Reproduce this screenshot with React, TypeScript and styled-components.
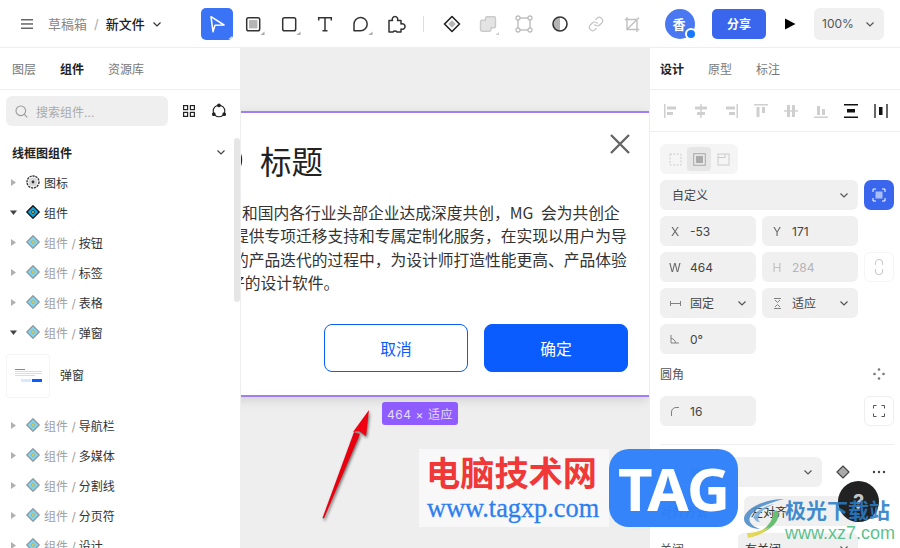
import React from "react";
import styled, { createGlobalStyle } from "styled-components";
import { Link } from "lucide-react";

const FONT = `Inter, "Noto Sans CJK SC", sans-serif`;

const Global = createGlobalStyle`
  html, body { margin: 0; padding: 0; background: #fff; }
  body { font-family: ${FONT}; color: #333; }
  * { box-sizing: border-box; }
`;

const Page = styled.div`
  position: relative;
  width: 900px;
  height: 548px;
  overflow: hidden;
  display: flex;
  flex-direction: column;
  font-size: 12px;
`;

/* ---------- top bar ---------- */
const TopBar = styled.header`
  height: 48px;
  flex: none;
  display: flex;
  align-items: center;
  border-bottom: 1px solid #eee;
`;
const FileArea = styled.div`
  width: 201px;
  flex: none;
  display: flex;
  align-items: center;
  padding-left: 20px;
  font-size: 13px;
`;
const Crumb = styled.span<{ $strong?: boolean }>`
  color: ${(p) => (p.$strong ? "#222" : "#888")};
  font-weight: ${(p) => (p.$strong ? 500 : 400)};
  white-space: nowrap;
`;
const Slash = styled.span`
  color: #aaa;
  margin: 0 7px;
`;
const ToolGroup = styled.div`
  display: flex;
  align-items: center;
  gap: 4px;
`;
const ToolButton = styled.div<{ $active?: boolean; $muted?: boolean }>`
  width: 32px;
  height: 32px;
  border-radius: 5px;
  display: flex;
  align-items: center;
  justify-content: center;
  background: ${(p) => (p.$active ? "#3b73f7" : "transparent")};
  color: ${(p) => (p.$muted ? "#c4c4c4" : "#333")};
`;
const ToolDivider = styled.div`
  width: 1px;
  height: 16px;
  background: #ddd;
  margin: 0 12px 0 10px;
`;
const Avatar = styled.div`
  position: relative;
  width: 30px;
  height: 30px;
  margin-left: 17px;
  border-radius: 50%;
  background: #4a78f0;
  color: #fff;
  font-size: 13px;
  font-weight: 700;
  display: flex;
  align-items: center;
  justify-content: center;
  padding-right: 2px;
`;
const AvatarDot = styled.span`
  position: absolute;
  right: -2px;
  bottom: -1px;
  width: 12px;
  height: 12px;
  border-radius: 50%;
  background: #1677ff;
  border: 2px solid #fff;
`;
const ShareButton = styled.div`
  width: 54px;
  height: 30px;
  margin-left: 17px;
  border-radius: 5px;
  background: #3a66ee;
  color: #fff;
  font-size: 12px;
  font-weight: 700;
  display: flex;
  align-items: center;
  justify-content: center;
`;
const PlayButton = styled.div`
  width: 24px;
  height: 24px;
  margin: 0 12px;
  display: flex;
  align-items: center;
  justify-content: center;
`;
const ZoomBox = styled.div`
  width: 70px;
  height: 32px;
  border-radius: 6px;
  background: #f0f0f0;
  color: #555;
  display: flex;
  align-items: center;
  justify-content: space-between;
  padding: 0 9px 0 8px;
`;

/* ---------- main columns ---------- */
const Main = styled.div`
  flex: 1;
  min-height: 0;
  display: flex;
`;
const LeftPanel = styled.aside`
  position: relative;
  width: 241px;
  flex: none;
  border-right: 1px solid #eee;
  overflow: hidden;
  background: #fff;
`;
const Tabs = styled.div`
  height: 42px;
  display: flex;
  align-items: center;
  gap: 24px;
  border-bottom: 1px solid #eee;
`;
const LeftTabs = styled(Tabs)`
  padding-left: 12px;
`;
const RightTabs = styled(Tabs)`
  padding-left: 10px;
`;
const Tab = styled.span<{ $active?: boolean }>`
  color: ${(p) => (p.$active ? "#222" : "#777")};
  font-weight: ${(p) => (p.$active ? 600 : 400)};
`;
const SearchRow = styled.div`
  display: flex;
  align-items: center;
  padding: 6px 0 0 6px;
`;
const SearchBox = styled.div`
  width: 162px;
  height: 30px;
  margin-right: 6px;
  border-radius: 6px;
  background: #efefef;
  color: #aaa;
  display: flex;
  align-items: center;
  gap: 8px;
  padding: 0 9px;
`;
const SearchAction = styled.div`
  width: 30px;
  height: 30px;
  display: flex;
  align-items: center;
  justify-content: center;
`;
const SectionHead = styled.div`
  height: 30px;
  margin-top: 11px;
  padding: 0 14px 0 12px;
  display: flex;
  align-items: center;
  justify-content: space-between;
  font-weight: 600;
  color: #222;
`;
const TreeRow = styled.div`
  height: 30px;
  display: flex;
  align-items: center;
  padding-left: 10px;
  white-space: nowrap;
`;
const CaretSlot = styled.span`
  width: 16px;
  flex: none;
  display: flex;
  align-items: center;
`;
const TreeIcon = styled.span`
  width: 18px;
  flex: none;
  display: flex;
  align-items: center;
`;
const Prefix = styled.span`
  color: #a0a0a0;
  margin-right: 3px;
`;
const RowName = styled.span`
  color: #333;
`;
const ThumbRow = styled.div`
  height: 63px;
  display: flex;
  align-items: flex-start;
  gap: 10px;
  padding: 7px 0 0 6px;
`;
const ThumbName = styled.span`
  line-height: 44px;
  color: #333;
`;
const Thumb = styled.div`
  width: 44px;
  height: 44px;
  border: 1px solid #f4f4f4;
  border-radius: 3px;
  padding: 14px 7px 0 8px;
  display: flex;
  flex-direction: column;
  gap: 1px;
`;
const ThumbLine = styled.div<{ $w: number; $dark?: boolean }>`
  height: 1px;
  width: ${(p) => p.$w}px;
  background: ${(p) => (p.$dark ? "#888" : "#ddd")};
`;
const ThumbButtons = styled.div`
  display: flex;
  justify-content: flex-end;
  gap: 1px;
  margin-top: 2px;
`;
const ThumbButton = styled.div<{ $primary?: boolean }>`
  width: 10px;
  height: 3px;
  background: ${(p) => (p.$primary ? "#0a5cff" : "#dbe7ff")};
`;
const ScrollThumb = styled.div`
  position: absolute;
  left: 234px;
  top: 90px;
  width: 6px;
  height: 164px;
  border-radius: 3px;
  background: #e6e6e6;
`;

/* ---------- canvas ---------- */
const Canvas = styled.main`
  position: relative;
  flex: 1;
  background: #eee;
  overflow: hidden;
`;
const Frame = styled.section`
  position: absolute;
  left: -57px;
  top: 63px;
  width: 465px;
  height: 286px;
  background: #fff;
  border-top: 2px solid #a27ef5;
  border-bottom: 2px solid #a27ef5;
  box-shadow: 0 3px 10px rgba(0, 0, 0, 0.12);
  display: flex;
  flex-direction: column;
  color: #222;
`;
const TitleRow = styled.div`
  height: 48px;
  margin-top: 23px;
  padding-left: 23px;
  display: flex;
  align-items: center;
  gap: 17px;
  font-size: 31.5px;
  line-height: 48px;
  color: #222;
  font-family: "Noto Sans CJK SC", sans-serif;
`;
const CloseIcon = styled.div`
  position: absolute;
  top: 20px;
  right: 18px;
  width: 22px;
  height: 22px;
`;
const Body = styled.div`
  margin-top: 17px;
  font-family: "Noto Sans CJK SC", sans-serif;
  font-size: 15.75px;
  line-height: 23.3px;
  color: #333;
`;
const BodyLine = styled.div<{ $left: number; $word?: number }>`
  padding-left: ${(p) => p.$left}px;
  word-spacing: ${(p) => p.$word ?? 0}px;
  white-space: nowrap;
`;
const Actions = styled.div`
  margin-top: 30px;
  padding-right: 21px;
  display: flex;
  justify-content: flex-end;
  gap: 16px;
`;
const ModalButton = styled.div<{ $primary?: boolean }>`
  width: 144px;
  height: 48px;
  border-radius: 8px;
  border: 1px solid #0a5cff;
  background: ${(p) => (p.$primary ? "#0a5cff" : "#fff")};
  color: ${(p) => (p.$primary ? "#fff" : "#0a5cff")};
  font-family: "Noto Sans CJK SC", sans-serif;
  font-size: 15.75px;
  display: flex;
  align-items: center;
  justify-content: center;
`;
const SizeTag = styled.div`
  position: absolute;
  left: 141px;
  top: 354px;
  width: 76px;
  height: 23px;
  border-radius: 3px;
  background: #8f5cff;
  color: #e6dcff;
  font-size: 12px;
  letter-spacing: 0.55px;
  display: flex;
  align-items: center;
  justify-content: center;
  white-space: nowrap;
`;

/* ---------- right panel ---------- */
const RightPanel = styled.aside`
  width: 251px;
  flex: none;
  border-left: 1px solid #eee;
  overflow: hidden;
  background: #fff;
`;
const AlignRow = styled.div`
  height: 42px;
  padding-left: 6px;
  display: flex;
  align-items: center;
  border-bottom: 1px solid #eee;
`;
const AlignButton = styled.div<{ $on?: boolean }>`
  width: 30px;
  height: 30px;
  display: flex;
  align-items: center;
  justify-content: center;
  color: ${(p) => (p.$on ? "#111" : "#cfcfcf")};
`;
const Props = styled.div`
  padding: 12px 6px 0 10px;
`;
const PropGrid = styled.div`
  display: grid;
  grid-template-columns: 96px 96px 30px;
  grid-auto-rows: 30px;
  gap: 6px;
`;
const Segment = styled.div`
  grid-column: 1;
  width: 78px;
  border-radius: 6px;
  background: #f5f5f5;
  padding: 3px;
  display: flex;
`;
const SegItem = styled.div<{ $active?: boolean }>`
  width: 24px;
  border-radius: 4px;
  background: ${(p) => (p.$active ? "#e6e6e6" : "transparent")};
  display: flex;
  align-items: center;
  justify-content: center;
`;
const Field = styled.div<{ $span?: number; $muted?: boolean }>`
  grid-column: ${(p) => (p.$span ? `span ${p.$span}` : "auto")};
  background: #f0f0f0;
  border-radius: 6px;
  display: flex;
  align-items: center;
  position: relative;
  color: ${(p) => (p.$muted ? "#b5b5b5" : "#444")};
  white-space: nowrap;
`;
const FieldLead = styled.span`
  width: 30px;
  flex: none;
  display: flex;
  justify-content: center;
  color: inherit;
  opacity: 0.8;
`;
const FieldTail = styled.span`
  margin-left: auto;
  margin-right: 9px;
  display: flex;
`;
const CjkLabel = styled.span<{ $pad?: number }>`
  padding-left: ${(p) => p.$pad ?? 0}px;
  margin-bottom: 2px;
`;
const AccentButton = styled.div`
  background: #3a66ee;
  border-radius: 7px;
  display: flex;
  align-items: center;
  justify-content: center;
`;
const GhostButton = styled.div<{ $soft?: boolean }>`
  border: 1px solid ${(p) => (p.$soft ? "#f5f5f5" : "#eee")};
  border-radius: 6px;
  display: flex;
  align-items: center;
  justify-content: center;
`;
const PropHead = styled.div`
  height: 30px;
  margin-top: 5px;
  display: flex;
  align-items: center;
  justify-content: space-between;
  padding-right: 9px;
  color: #555;
`;
const CornerGrid = styled(PropGrid)`
  margin-top: 7px;
`;
const Rule = styled.div`
  height: 1px;
  background: #eee;
  margin-top: 18px;
`;
const CompRow = styled.div`
  margin-top: 12px;
  height: 30px;
  display: flex;
  align-items: center;
`;
const CompSelect = styled.div`
  width: 162px;
  height: 30px;
  border-radius: 6px;
  background: #f0f0f0;
  display: flex;
  align-items: center;
  padding: 0 9px 0 8px;
  gap: 8px;
  color: #888;
`;
const CompAction = styled.div`
  width: 30px;
  height: 30px;
  margin-left: 6px;
  display: flex;
  align-items: center;
  justify-content: center;
`;
const PropRow = styled.div<{ $offset: number; $top: number }>`
  display: grid;
  grid-template-columns: ${(p) => p.$offset}px 1fr;
  margin-top: ${(p) => p.$top}px;
  height: 30px;
  width: 198px;
  align-items: center;
  color: #555;
`;
const PropSelect = styled.div`
  height: 30px;
  border-radius: 6px;
  background: #f0f0f0;
  display: flex;
  align-items: center;
  padding: 0 9px 0 7px;
  justify-content: space-between;
  color: #333;
`;

/* ---------- overlays ---------- */
const ArrowMark = styled.svg`
  position: absolute;
  left: 300px;
  top: 390px;
  filter: drop-shadow(1px 2px 1.5px rgba(0, 0, 0, 0.55));
`;
const Help = styled.div`
  position: absolute;
  left: 838px;
  top: 481px;
  width: 41px;
  height: 41px;
  border-radius: 50%;
  background: #222;
  color: #c8c8c8;
  font-size: 20px;
  font-weight: 700;
  display: flex;
  align-items: center;
  justify-content: center;
`;
const SiteBadge = styled.div`
  position: absolute;
  left: 419px;
  top: 449px;
  display: flex;
`;
const SiteBox = styled.div`
  width: 190px;
  height: 78px;
  background: #f8f8f9;
  display: flex;
  flex-direction: column;
  padding-left: 8px;
`;
const SiteName = styled.div`
  font-family: "Noto Sans CJK SC", sans-serif;
  font-weight: 700;
  font-size: 34.2px;
  line-height: 45px;
  margin-left: -1px;
  color: #f03838;
  white-space: nowrap;
`;
const SiteUrl = styled.div`
  font-family: "Liberation Serif", serif;
  font-size: 26.3px;
  line-height: 30px;
  color: #2d7ff0;
  -webkit-text-stroke: 0.3px #2d7ff0;
  white-space: nowrap;
`;
const TagLogo = styled.div`
  width: 129px;
  height: 78px;
  border-radius: 20px;
  background: rgba(45, 127, 249, 0.96);
  color: #fff;
  font-family: "Noto Sans", sans-serif;
  font-weight: 700;
  font-size: 60px;
  line-height: 78px;
  letter-spacing: -1px;
  display: flex;
  align-items: center;
  justify-content: center;
`;
const XzMark = styled.div`
  position: absolute;
  left: 742px;
  top: 495px;
  display: flex;
  gap: 1px;
`;
const XzText = styled.div`
  display: flex;
  flex-direction: column;
  padding-top: 1px;
`;
const XzName = styled.div`
  font-family: "Noto Sans CJK SC", sans-serif;
  font-weight: 700;
  font-size: 21px;
  line-height: 27px;
  color: rgba(40, 125, 200, 0.88);
  white-space: nowrap;
`;
const XzUrl = styled.div`
  font-family: "Liberation Sans", sans-serif;
  font-size: 18px;
  line-height: 21px;
  color: rgba(80, 190, 135, 0.95);
  white-space: nowrap;
`;

/* ---------- icons ---------- */
const Chevron = ({ color = "#555", size = 10 }: { color?: string; size?: number }) => (
  <svg width={size} height={size} viewBox="0 0 10 10" fill="none">
    <path d="M1.5 3.5 5 7l3.5-3.5" stroke={color} strokeWidth="1.2" />
  </svg>
);
const Corner = ({ fill = "#aaa" }: { fill?: string }) => <path d="M27.5 23.5v3.5h-4z" fill={fill} />;
const T32 = ({ children }: { children: React.ReactNode }) => (
  <svg width="32" height="32" viewBox="0 0 32 32" fill="none">
    {children}
  </svg>
);
const Caret = ({ open }: { open?: boolean }) => (
  <svg width="7" height="7" viewBox="0 0 7 7">
    {open ? <path d="M0 1.5h7L3.5 6z" fill="#444" /> : <path d="M1 0l5 3.5L1 7z" fill="#b0b0b0" />}
  </svg>
);
const CompIcon = ({ dark }: { dark?: boolean }) => (
  <svg width="14" height="14" viewBox="0 0 14 14">
    <path
      d="M7 .8 13.2 7 7 13.2.8 7z"
      fill={dark ? "#10a5dc" : "#80d4ee"}
      stroke={dark ? "#111" : "#8e9aa0"}
      strokeWidth="1.3"
      strokeLinejoin="round"
    />
    <circle cx="7" cy="7" r="1.8" fill={dark ? "#222" : "#a8a870"} />
    <circle cx="7" cy="7" r=".9" fill="#f2d640" />
  </svg>
);
const GearIcon = () => (
  <svg width="14" height="14" viewBox="0 0 14 14" fill="none">
    <circle cx="7" cy="7" r="6" stroke="#333" strokeWidth="1.4" strokeDasharray="2.2 .8" />
    <circle cx="7" cy="7" r="4.6" fill="#d8d8d8" />
    <circle cx="7" cy="7" r="1.4" fill="#333" />
  </svg>
);
const A20 = ({ children }: { children: React.ReactNode }) => (
  <svg width="20" height="20" viewBox="0 0 20 20" fill="currentColor">
    {children}
  </svg>
);
const AlignIcons = [
  <A20 key="0"><rect x="3" y="3" width="1.5" height="14" /><rect x="6" y="5.5" width="9" height="3" /><rect x="6" y="11" width="6" height="3" /></A20>,
  <A20 key="1"><rect x="9.2" y="3" width="1.5" height="14" /><rect x="4" y="5.5" width="12" height="3" /><rect x="6" y="11" width="8" height="3" /></A20>,
  <A20 key="2"><rect x="15.5" y="3" width="1.5" height="14" /><rect x="5" y="5.5" width="9" height="3" /><rect x="8" y="11" width="6" height="3" /></A20>,
  <A20 key="3"><rect x="3" y="3" width="14" height="1.5" /><rect x="5.5" y="6" width="3" height="10" /><rect x="11" y="6" width="3" height="6" /></A20>,
  <A20 key="4"><rect x="3" y="9.2" width="14" height="1.5" /><rect x="6" y="4" width="3" height="12" /><rect x="11" y="4" width="3" height="12" /></A20>,
  <A20 key="5"><rect x="3" y="15.5" width="14" height="1.5" /><rect x="6" y="5" width="3" height="9" /><rect x="11" y="8" width="3" height="6" /></A20>,
  <A20 key="6"><rect x="3" y="3" width="14" height="1.5" /><rect x="3" y="15.5" width="14" height="1.5" /><rect x="6" y="8" width="8" height="3.5" /></A20>,
  <A20 key="7"><rect x="3" y="3" width="2" height="14" fill="#666" /><rect x="15" y="3" width="2" height="14" fill="#666" /><rect x="8" y="6" width="3.5" height="8" /></A20>,
];

const treeRows = [
  { name: "图标", gear: true },
  { name: "组件", dark: true, open: true },
  { prefix: true, name: "按钮" },
  { prefix: true, name: "标签" },
  { prefix: true, name: "表格" },
  { prefix: true, name: "弹窗", open: true },
];
const treeRowsAfter = ["导航栏", "多媒体", "分割线", "分页符", "设计"];

type Row = { name: string; gear?: boolean; dark?: boolean; open?: boolean; prefix?: boolean };
const Tree = ({ name, gear, dark, open, prefix }: Row) => (
  <TreeRow>
    <CaretSlot>
      <Caret open={open} />
    </CaretSlot>
    <TreeIcon>{gear ? <GearIcon /> : <CompIcon dark={dark} />}</TreeIcon>
    {prefix && <Prefix>组件 /</Prefix>}
    <RowName>{name}</RowName>
  </TreeRow>
);

export default function App() {
  return (
    <Page>
      <Global />
      <TopBar>
        <FileArea>
          <svg width="14" height="12" viewBox="0 0 14 12" fill="#666" style={{ marginRight: 14 }}>
            <rect x="1" y="1" width="12" height="1.5" />
            <rect x="1" y="5.2" width="12" height="1.5" />
            <rect x="1" y="9.5" width="12" height="1.5" />
          </svg>
          <Crumb>草稿箱</Crumb>
          <Slash>/</Slash>
          <Crumb $strong>新文件</Crumb>
          <span style={{ marginLeft: 7, display: "flex" }}>
            <Chevron color="#333" />
          </span>
        </FileArea>
        <ToolGroup>
          <ToolButton $active>
            <T32>
              <path d="M10 8.7 23 17l-9 .2-2 6.5z" stroke="#fff" strokeWidth="1.5" strokeLinejoin="round" />
              <path d="M31 28v3h-3.5z" fill="#cfdcfb" />
            </T32>
          </ToolButton>
          <ToolButton>
            <T32>
              <rect x="9.7" y="9.7" width="13" height="13" rx="1.8" stroke="#333" strokeWidth="1.5" />
              <rect x="12" y="12" width="8.4" height="8.4" fill="#b5b5b5" />
              <Corner />
            </T32>
          </ToolButton>
          <ToolButton>
            <T32>
              <rect x="9.7" y="9.7" width="13" height="13" rx="1.8" stroke="#333" strokeWidth="1.5" />
              <Corner />
            </T32>
          </ToolButton>
          <ToolButton>
            <T32>
              <path d="M9.7 12.5V9.7h12.6v2.8M16 9.7v13M13.5 22.7h5" stroke="#333" strokeWidth="1.5" />
            </T32>
          </ToolButton>
          <ToolButton>
            <T32>
              <path
                d="M9 22.7v-6.2a6.6 6.6 0 1 1 6.6 6.2z"
                stroke="#333"
                strokeWidth="1.5"
                strokeLinejoin="round"
              />
              <Corner />
            </T32>
          </ToolButton>
          <ToolButton>
            <T32>
              <path
                d="M8 12.5h3.5a2.8 2.8 0 1 1 5 0H20v3.5a2.8 2.8 0 1 1 0 5V24h-4a2.4 2.4 0 0 0-4 0H8z"
                stroke="#333"
                strokeWidth="1.5"
                strokeLinejoin="round"
              />
            </T32>
          </ToolButton>
        </ToolGroup>
        <ToolDivider />
        <ToolGroup>
          <ToolButton>
            <T32>
              <path d="M16 8.5 23.5 16 16 23.5 8.5 16z" stroke="#222" strokeWidth="1.6" strokeLinejoin="round" />
              <path d="M16 12.2 19.8 16 16 19.8 12.2 16z" fill="#b5b5b5" />
            </T32>
          </ToolButton>
          <ToolButton>
            <T32>
              <path
                d="M15 8.7h7a1.5 1.5 0 0 1 1.5 1.5v8a1.5 1.5 0 0 1-1.5 1.5h-3v2.1a1.5 1.5 0 0 1-1.5 1.5H10a1.5 1.5 0 0 1-1.5-1.5v-8a1.5 1.5 0 0 1 1.5-1.5h3.5v-2.1A1.5 1.5 0 0 1 15 8.7z"
                fill="#e4e4e4"
                stroke="#cacaca"
                strokeWidth="1.4"
              />
              <path d="M27 24v3h-3.5z" fill="#ccc" />
            </T32>
          </ToolButton>
          <ToolButton>
            <T32>
              <rect x="10" y="10" width="12" height="12" stroke="#bdbdbd" strokeWidth="1.4" />
              {[10, 22].map((x) =>
                [10, 22].map((y) => (
                  <circle key={`${x}${y}`} cx={x} cy={y} r="2" fill="#fff" stroke="#bdbdbd" strokeWidth="1.3" />
                ))
              )}
            </T32>
          </ToolButton>
          <ToolButton>
            <T32>
              <path d="M16 9.5a6.5 6.5 0 0 0 0 13z" fill="#b5b5b5" />
              <circle cx="16" cy="16" r="7" stroke="#333" strokeWidth="1.6" />
            </T32>
          </ToolButton>
          <ToolButton $muted>
            <Link size={16} strokeWidth={1.8} />
          </ToolButton>
          <ToolButton>
            <T32>
              <path
                d="M11 9v12.5h12.3M8.7 11.5H21V24M11 21.5 23 9.5"
                stroke="#c0c0c0"
                strokeWidth="1.4"
              />
            </T32>
          </ToolButton>
        </ToolGroup>
        <Avatar>
          香
          <AvatarDot />
        </Avatar>
        <ShareButton>分享</ShareButton>
        <PlayButton>
          <svg width="12" height="12" viewBox="0 0 12 12">
            <path d="M1 .5 11.5 6 1 11.5z" fill="#000" />
          </svg>
        </PlayButton>
        <ZoomBox>
          100%
          <Chevron />
        </ZoomBox>
      </TopBar>

      <Main>
        <LeftPanel>
          <LeftTabs>
            <Tab>图层</Tab>
            <Tab $active>组件</Tab>
            <Tab>资源库</Tab>
          </LeftTabs>
          <SearchRow>
            <SearchBox>
              <svg width="13" height="13" viewBox="0 0 13 13" fill="none" stroke="#999" strokeWidth="1.1">
                <circle cx="5.8" cy="5.8" r="4.8" />
                <path d="m9.3 9.3 3 3" />
              </svg>
              搜索组件...
            </SearchBox>
            <SearchAction>
              <svg width="14" height="14" viewBox="0 0 14 14" fill="none" stroke="#222" strokeWidth="1.2">
                <rect x="1.6" y="1.6" width="4" height="4" />
                <rect x="8.4" y="1.6" width="4" height="4" />
                <rect x="1.6" y="8.4" width="4" height="4" />
                <rect x="8.4" y="8.4" width="4" height="4" />
              </svg>
            </SearchAction>
            <SearchAction>
              <svg width="16" height="16" viewBox="0 0 16 16" fill="none" stroke="#222" strokeWidth="1.1">
                <circle cx="8" cy="8" r="5.8" />
                <circle cx="8" cy="2.4" r="1.3" fill="#222" />
                <circle cx="2.8" cy="11.2" r="1.3" fill="#222" />
                <circle cx="13.2" cy="11.2" r="1.3" fill="#222" />
              </svg>
            </SearchAction>
          </SearchRow>
          <SectionHead>
            线框图组件
            <Chevron color="#444" />
          </SectionHead>
          {treeRows.map((r) => (
            <Tree key={r.name} {...r} />
          ))}
          <ThumbRow>
            <Thumb>
              <ThumbLine $w={10} $dark />
              <ThumbLine $w={27} />
              <ThumbLine $w={27} />
              <ThumbLine $w={20} />
              <ThumbButtons>
                <ThumbButton />
                <ThumbButton $primary />
              </ThumbButtons>
            </Thumb>
            <ThumbName>弹窗</ThumbName>
          </ThumbRow>
          {treeRowsAfter.map((n) => (
            <Tree key={n} prefix name={n} />
          ))}
          <ScrollThumb />
        </LeftPanel>

        <Canvas>
          <Frame>
            <TitleRow>
              <svg width="36" height="36" viewBox="0 0 36 36" fill="none">
                <circle cx="18" cy="18" r="16" stroke="#222" strokeWidth="2.4" />
              </svg>
              标题
            </TitleRow>
            <CloseIcon>
              <svg width="22" height="22" viewBox="0 0 22 22" fill="none" stroke="#666" strokeWidth="2.4">
                <path d="m2 2 18 18M20 2 2 20" />
              </svg>
            </CloseIcon>
            <Body>
              <BodyLine $left={58} $word={4}>
                和国内各行业头部企业达成深度共创，MG 会为共创企
              </BodyLine>
              <BodyLine $left={49}>提供专项迁移支持和专属定制化服务，在实现以用户为导</BodyLine>
              <BodyLine $left={49}>的产品迭代的过程中，为设计师打造性能更高、产品体验</BodyLine>
              <BodyLine $left={45}>好的设计软件。</BodyLine>
            </Body>
            <Actions>
              <ModalButton>取消</ModalButton>
              <ModalButton $primary>确定</ModalButton>
            </Actions>
          </Frame>
          <SizeTag>464 × 适应</SizeTag>
        </Canvas>

        <RightPanel>
          <RightTabs>
            <Tab $active>设计</Tab>
            <Tab>原型</Tab>
            <Tab>标注</Tab>
          </RightTabs>
          <AlignRow>
            {AlignIcons.map((icon, i) => (
              <AlignButton key={i} $on={i >= 6}>
                {icon}
              </AlignButton>
            ))}
          </AlignRow>
          <Props>
            <PropGrid>
              <Segment>
                <SegItem>
                  <svg width="13" height="13" viewBox="0 0 13 13" fill="none" stroke="#ccc">
                    <rect x="1" y="1" width="11" height="11" strokeDasharray="2 1.5" />
                  </svg>
                </SegItem>
                <SegItem $active>
                  <svg width="13" height="13" viewBox="0 0 13 13" fill="none">
                    <rect x=".7" y=".7" width="11.6" height="11.6" stroke="#aaa" />
                    <rect x="3" y="3" width="7" height="7" fill="#aaa" />
                  </svg>
                </SegItem>
                <SegItem>
                  <svg width="13" height="13" viewBox="0 0 13 13" fill="none" stroke="#ccc">
                    <rect x="1" y="1" width="11" height="11" />
                    <path d="M1 4.5h7V1" />
                  </svg>
                </SegItem>
              </Segment>
              <span />
              <span />
              <Field $span={2}>
                <CjkLabel $pad={12}>自定义</CjkLabel>
                <FieldTail>
                  <Chevron />
                </FieldTail>
              </Field>
              <AccentButton>
                <svg width="14" height="14" viewBox="0 0 14 14" fill="none">
                  <path d="M1 4V1h3M10 1h3v3M13 10v3h-3M4 13H1v-3" stroke="#fff" strokeWidth="1" />
                  <rect x="3.5" y="3.5" width="7" height="7" fill="#a9bdf8" />
                </svg>
              </AccentButton>
              <Field>
                <FieldLead>X</FieldLead>-53
              </Field>
              <Field>
                <FieldLead>Y</FieldLead>171
              </Field>
              <span />
              <Field>
                <FieldLead>W</FieldLead>464
              </Field>
              <Field $muted>
                <FieldLead>H</FieldLead>284
              </Field>
              <GhostButton $soft>
                <svg width="10" height="18" viewBox="0 0 10 18" fill="none" stroke="#ccc" strokeWidth="1.1">
                  <path d="M1.5 7V5a3.5 3.5 0 0 1 7 0v2M1.5 11v2a3.5 3.5 0 0 0 7 0v-2" />
                </svg>
              </GhostButton>
              <Field>
                <FieldLead>
                  <svg width="11" height="9" viewBox="0 0 11 9" fill="none" stroke="#666">
                    <path d="M.5 2v5M10.5 2v5M.5 4.5h10" />
                  </svg>
                </FieldLead>
                <CjkLabel>固定</CjkLabel>
                <FieldTail>
                  <Chevron />
                </FieldTail>
              </Field>
              <Field>
                <FieldLead>
                  <svg width="9" height="11" viewBox="0 0 9 11" fill="none" stroke="#666">
                    <path d="M1 .5h7M1 10.5h7M2 2l2.5 2.5L7 2M2 9l2.5-2.5L7 9" />
                  </svg>
                </FieldLead>
                <CjkLabel>适应</CjkLabel>
                <FieldTail>
                  <Chevron />
                </FieldTail>
              </Field>
              <span />
              <Field>
                <FieldLead>
                  <svg width="10" height="10" viewBox="0 0 10 10" fill="none" stroke="#666">
                    <path d="M1 1v8h8M1 4.5a4.5 4.5 0 0 1 4.5 4.5" />
                  </svg>
                </FieldLead>
                0°
              </Field>
            </PropGrid>
            <PropHead>
              <CjkLabel>圆角</CjkLabel>
              <svg width="12" height="12" viewBox="0 0 12 12" fill="#777">
                <circle cx="6" cy="1.5" r="1.3" />
                <circle cx="1.5" cy="6" r="1.3" />
                <circle cx="10.5" cy="6" r="1.3" />
                <circle cx="6" cy="10.5" r="1.3" />
              </svg>
            </PropHead>
            <CornerGrid>
              <Field>
                <FieldLead>
                  <svg width="9" height="9" viewBox="0 0 9 9" fill="none" stroke="#666">
                    <path d="M.5 9V5a4.5 4.5 0 0 1 4.5-4.5h3" />
                  </svg>
                </FieldLead>
                16
              </Field>
              <span />
              <GhostButton>
                <svg width="12" height="12" viewBox="0 0 12 12" fill="none" stroke="#555">
                  <path d="M.5 3.5v-3h3M8.5.5h3v3M11.5 8.5v3h-3M3.5 11.5h-3v-3" />
                </svg>
              </GhostButton>
            </CornerGrid>
            <Rule />
            <CompRow>
              <CompSelect>
                <svg width="14" height="14" viewBox="0 0 14 14" fill="none" stroke="#aaa">
                  <path d="M7 1 13 7 7 13 1 7z" />
                </svg>
                弹窗
                <FieldTail style={{ marginRight: 0 }}>
                  <Chevron />
                </FieldTail>
              </CompSelect>
              <CompAction>
                <svg width="14" height="14" viewBox="0 0 14 14">
                  <path d="M7 1 13 7 7 13 1 7z" fill="#aaa" stroke="#444" strokeWidth="1.1" strokeLinejoin="round" />
                </svg>
              </CompAction>
              <CompAction>
                <svg width="14" height="4" viewBox="0 0 14 4" fill="#444">
                  <circle cx="2" cy="2" r="1.2" />
                  <circle cx="7" cy="2" r="1.2" />
                  <circle cx="12" cy="2" r="1.2" />
                </svg>
              </CompAction>
            </CompRow>
            <PropRow $offset={84} $top={9}>
              对齐方式
              <PropSelect>左对齐</PropSelect>
            </PropRow>
            <PropRow $offset={78} $top={7}>
              关闭
              <PropSelect>
                有关闭
                <Chevron />
              </PropSelect>
            </PropRow>
          </Props>
        </RightPanel>
      </Main>

      <ArrowMark width="90" height="140" viewBox="0 0 90 140">
        <path d="M22.5 128 24 128.5 60 44 54 42z" fill="#e8000f" />
        <path d="M69 20 53 42 59 41 66 46z" fill="#f00010" />
      </ArrowMark>

      <Help>?</Help>

      <SiteBadge>
        <SiteBox>
          <SiteName>电脑技术网</SiteName>
          <SiteUrl>www.tagxp.com</SiteUrl>
        </SiteBox>
        <TagLogo>TAG</TagLogo>
      </SiteBadge>

      <XzMark>
        <svg width="42" height="44" viewBox="0 0 42 44" fill="none">
          <path d="M42 4C22 4 2 14 2 24c0 6 8 10 16 10-8-3-12-7-10-12C11 14 26 8 42 4z" fill="#4f8fcb" opacity=".9" />
          <path d="M32 9c-10 2-20 8-20 13 0 3 3 5 6 5-4-3-2-11 14-18z" fill="#7fb0dc" opacity=".9" />
          <path d="M36 17c3 9-8 20-28 25 9-4 22-11 23-23 .2-3 4-5 5-2z" fill="#62bd6a" opacity=".95" />
          <path d="M6 43c10-2 17-5 21-11-8 4-15 6-22 6z" fill="#e2d650" opacity=".95" />
        </svg>
        <XzText>
          <XzName>极光下载站</XzName>
          <XzUrl>www.xz7.com</XzUrl>
        </XzText>
      </XzMark>
    </Page>
  );
}
